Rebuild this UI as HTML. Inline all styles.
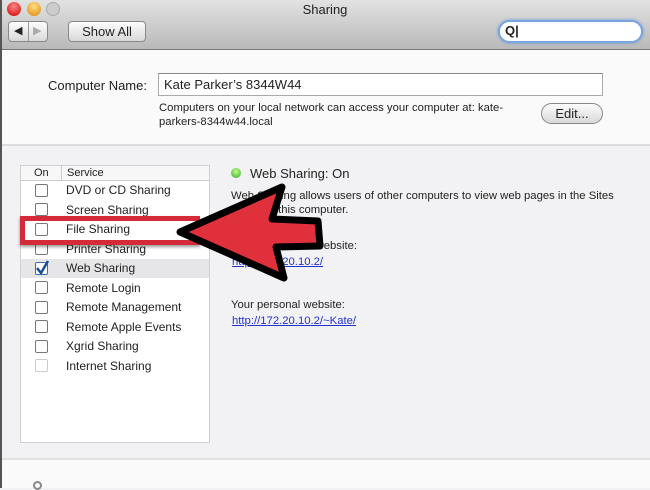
<!DOCTYPE html>
<html><head><meta charset="utf-8"><style>
*{margin:0;padding:0;box-sizing:border-box}
body{width:650px;height:488px;overflow:hidden;position:relative;font-family:"Liberation Sans",sans-serif;color:#222;background:#f2f2f4}
.a{position:absolute;white-space:nowrap}
.tb{position:absolute;left:0;top:0;width:650px;height:50px;background:linear-gradient(#e2e2e2,#b9b9b9);border-bottom:1px solid #777}
.top{position:absolute;left:0;top:50px;width:650px;height:96px;background:#fafafa;border-bottom:2px solid #dcdcdc}
.bot{position:absolute;left:0;top:458px;width:650px;height:30px;background:#fafafa;border-top:2px solid #e2e2e2}
.btn{position:absolute;background:linear-gradient(#fdfdfd,#d8d8d8);border:1px solid #888;border-radius:4px;font-size:13px;text-align:center}
.cb{position:absolute;left:35px;width:13px;height:13px;border:1px solid #777;border-radius:2px;background:#fff}
.row{position:absolute;left:66px;font-size:12px}
a{color:#2233cc;text-decoration:underline}
</style></head><body>
<div class="tb"></div>
<div class="a" style="left:0;width:650px;text-align:center;font-size:13px;top:2px">Sharing</div>
<div style="position:absolute;left:7px;top:2px;width:14px;height:14px;border-radius:50%;background:radial-gradient(circle at 50% 30%,#f88,#c00)"></div>
<div style="position:absolute;left:27px;top:2px;width:14px;height:14px;border-radius:50%;background:radial-gradient(circle at 50% 30%,#fd8,#d80)"></div>
<div style="position:absolute;left:46px;top:2px;width:14px;height:14px;border-radius:50%;background:#ccc;border:1px solid #aaa"></div>
<div class="btn" style="left:8px;top:21px;width:40px;height:21px"></div>
<div style="position:absolute;left:28px;top:22px;width:1px;height:19px;background:#999"></div>
<div class="a" style="left:14px;top:24px;font-size:11px">◀</div>
<div class="a" style="left:33px;top:24px;font-size:11px;color:#aaa">▶</div>
<div class="btn" style="left:68px;top:21px;height:21px;width:78px;line-height:19px">Show All</div>
<div style="position:absolute;left:498px;top:20px;width:145px;height:23px;border-radius:12px;background:#fff;border:2px solid #7aa6e0;box-shadow:0 0 3px #6a9ad8"></div>
<div class="a" style="left:505px;top:23px;font-size:13px;font-weight:bold">Q|</div>
<div class="top"></div>
<div class="a" style="left:48px;top:78px;font-size:13px">Computer Name:</div>
<div style="position:absolute;left:158px;top:73px;width:445px;height:23px;background:#fff;border:1px solid #aaa;border-top-color:#888"></div>
<div class="a" style="left:164px;top:77px;font-size:13px">Kate Parker’s 8344W44</div>
<div class="a" style="left:159px;top:101px;font-size:11.3px;line-height:14px">Computers on your local network can access your computer at: kate-<br>parkers-8344w44.local</div>
<div class="btn" style="left:541px;top:103px;width:62px;height:21px;border-radius:11px;line-height:19px">Edit...</div>
<div class="bot"></div>
<div style="position:absolute;left:0;top:0;width:2px;height:488px;background:#555"></div>
<div style="position:absolute;left:20px;top:165px;width:190px;height:278px;background:#fff;border:1px solid #d0d0d0"></div>
<div style="position:absolute;left:21px;top:166px;width:188px;height:15px;background:#f7f7f7;border-bottom:1px solid #ccc"></div>
<div style="position:absolute;left:61px;top:166px;width:1px;height:14px;background:#ccc"></div>
<div class="a" style="left:34px;top:167px;font-size:11px">On</div>
<div class="a" style="left:67px;top:167px;font-size:11px">Service</div>
<div style="position:absolute;left:21px;top:259px;width:188px;height:19px;background:#e6e6e8"></div>
<div class="cb" style="top:184px"></div><div class="row" style="top:183px">DVD or CD Sharing</div>
<div class="cb" style="top:203px"></div><div class="row" style="top:203px">Screen Sharing</div>
<div class="cb" style="top:223px"></div><div class="row" style="top:222px">File Sharing</div>
<div class="cb" style="top:242px"></div><div class="row" style="top:242px">Printer Sharing</div>
<div class="cb" style="top:262px;border-color:#3a6fb0"></div>
<svg style="position:absolute;left:34px;top:258px" width="16" height="18"><path d="M3 10 L7 15 L14 3" fill="none" stroke="#1b4f9a" stroke-width="2.5"/></svg>
<div class="row" style="top:261px">Web Sharing</div>
<div class="cb" style="top:281px"></div><div class="row" style="top:281px">Remote Login</div>
<div class="cb" style="top:301px"></div><div class="row" style="top:300px">Remote Management</div>
<div class="cb" style="top:320px"></div><div class="row" style="top:320px">Remote Apple Events</div>
<div class="cb" style="top:340px"></div><div class="row" style="top:339px">Xgrid Sharing</div>
<div class="cb" style="top:359px;border-color:#ccc"></div><div class="row" style="top:359px">Internet Sharing</div>
<div style="position:absolute;left:231px;top:168px;width:10px;height:10px;border-radius:50%;background:radial-gradient(circle at 50% 35%,#bf8,#3a2)"></div>
<div class="a" style="left:250px;top:166px;font-size:13px">Web Sharing: On</div>
<div class="a" style="left:231px;top:189px;font-size:11.3px;line-height:14px">Web Sharing allows users of other computers to view web pages in the Sites<br>folder on this computer.</div>
<div class="a" style="left:231px;top:240px;font-size:11.3px">Your computer’s website:</div>
<div class="a" style="left:232px;top:256px;font-size:11.3px"><a>http://172.20.10.2/</a></div>
<div class="a" style="left:231px;top:299px;font-size:11.3px">Your personal website:</div>
<div class="a" style="left:232px;top:315px;font-size:11.3px"><a>http://172.20.10.2/~Kate/</a></div>
<div style="position:absolute;left:20px;top:216px;width:180px;height:29px;border:5px solid #d42a3a;box-shadow:0 2px 3px rgba(0,0,0,.4)"></div>
<svg style="position:absolute;left:0;top:0" width="650" height="488"><polygon points="180,232 282,187 272,219 318,221 320,246 276,247 284,278" fill="#e0303c" stroke="#000" stroke-width="7" stroke-linejoin="round"/></svg>
<div style="position:absolute;left:33px;top:481px;width:9px;height:9px;border-radius:50%;border:2px solid #888"></div>
</body></html>
